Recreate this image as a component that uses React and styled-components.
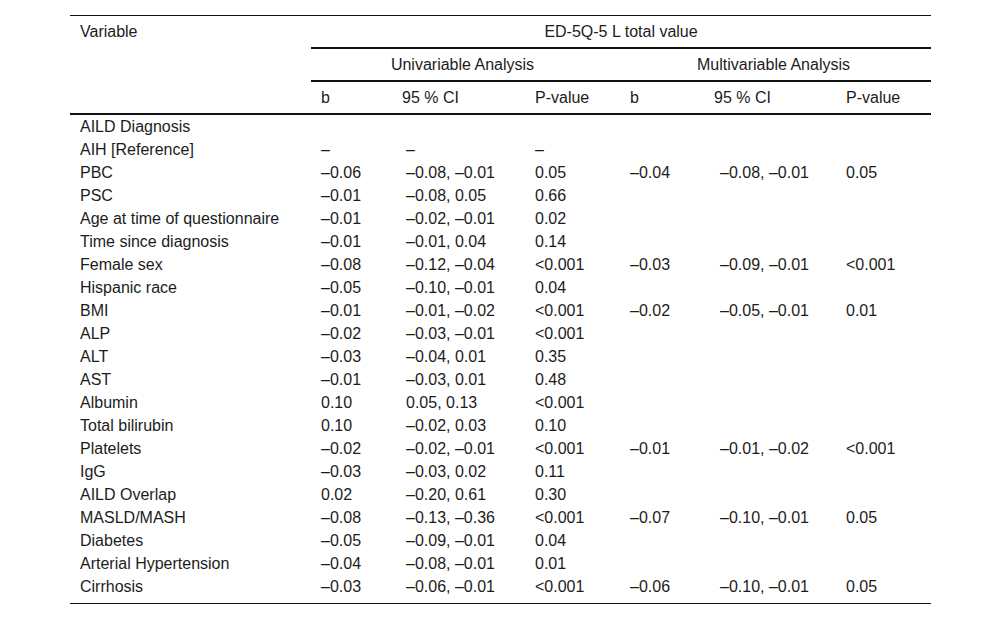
import React from 'react';
import styled, { createGlobalStyle } from 'styled-components';

const GlobalStyle = createGlobalStyle`
  html, body {
    margin: 0;
    padding: 0;
    background: #fff;
  }
  body {
    font-family: "Liberation Sans", Arial, sans-serif;
    color: #1c1c1c;
  }
`;

const rows = [
  ['AILD Diagnosis'],
  ['AIH [Reference]', '–', '–', '–'],
  ['PBC', '–0.06', '–0.08, –0.01', '0.05', '–0.04', '–0.08, –0.01', '0.05'],
  ['PSC', '–0.01', '–0.08, 0.05', '0.66'],
  ['Age at time of questionnaire', '–0.01', '–0.02, –0.01', '0.02'],
  ['Time since diagnosis', '–0.01', '–0.01, 0.04', '0.14'],
  ['Female sex', '–0.08', '–0.12, –0.04', '<0.001', '–0.03', '–0.09, –0.01', '<0.001'],
  ['Hispanic race', '–0.05', '–0.10, –0.01', '0.04'],
  ['BMI', '–0.01', '–0.01, –0.02', '<0.001', '–0.02', '–0.05, –0.01', '0.01'],
  ['ALP', '–0.02', '–0.03, –0.01', '<0.001'],
  ['ALT', '–0.03', '–0.04, 0.01', '0.35'],
  ['AST', '–0.01', '–0.03, 0.01', '0.48'],
  ['Albumin', '0.10', '0.05, 0.13', '<0.001'],
  ['Total bilirubin', '0.10', '–0.02, 0.03', '0.10'],
  ['Platelets', '–0.02', '–0.02, –0.01', '<0.001', '–0.01', '–0.01, –0.02', '<0.001'],
  ['IgG', '–0.03', '–0.03, 0.02', '0.11'],
  ['AILD Overlap', '0.02', '–0.20, 0.61', '0.30'],
  ['MASLD/MASH', '–0.08', '–0.13, –0.36', '<0.001', '–0.07', '–0.10, –0.01', '0.05'],
  ['Diabetes', '–0.05', '–0.09, –0.01', '0.04'],
  ['Arterial Hypertension', '–0.04', '–0.08, –0.01', '0.01'],
  ['Cirrhosis', '–0.03', '–0.06, –0.01', '<0.001', '–0.06', '–0.10, –0.01', '0.05'],
];

const colWidths = [241, 85, 129, 95, 90, 126, 95];

function App() {
  return (
    <Page>
      <GlobalStyle />
      <Table>
        <colgroup>
          {colWidths.map((w, i) => (
            <col key={i} style={{ width: w }} />
          ))}
        </colgroup>
        <thead>
          <tr>
            <HeadCell rowSpan={3} $top>
              Variable
            </HeadCell>
            <HeadCell colSpan={6} $center $rule>
              ED-5Q-5 L total value
            </HeadCell>
          </tr>
          <tr>
            <HeadCell colSpan={3} $center $rule $shift={-6}>
              Univariable Analysis
            </HeadCell>
            <HeadCell colSpan={3} $center $rule $shift={-4}>
              Multivariable Analysis
            </HeadCell>
          </tr>
          <tr>
            <HeadCell $rule>b</HeadCell>
            <HeadCell $rule $shift={-4}>95 % CI</HeadCell>
            <HeadCell $rule>P-value</HeadCell>
            <HeadCell $rule>b</HeadCell>
            <HeadCell $rule $shift={-6}>95 % CI</HeadCell>
            <HeadCell $rule>P-value</HeadCell>
          </tr>
        </thead>
        <tbody>
          {rows.map((r, i) => (
            <tr key={i}>
              {Array.from({ length: 7 }).map((_, j) => (
                <Cell key={j} $last={i === rows.length - 1}>
                  {r[j] || ''}
                </Cell>
              ))}
            </tr>
          ))}
        </tbody>
      </Table>
    </Page>
  );
}

export default App;

// STYLED COMPONENTS
const Page = styled.div`
  padding: 15px 0 0 70px;
`;

const Table = styled.table`
  width: 861px;
  table-layout: fixed;
  border-collapse: separate;
  border-spacing: 0;
  border-top: 1px solid #111;
  border-bottom: 1px solid #111;
  font-size: 16px;
`;

const HeadCell = styled.th`
  font-weight: normal;
  text-align: ${(p) => (p.$center ? 'center' : 'left')};
  vertical-align: top;
  line-height: 31px;
  height: 31px;
  padding: 0 10px 0 ${(p) => 10 + (p.$shift || 0)}px;
  border-bottom: 2px solid #111;
  white-space: nowrap;
`;

const Cell = styled.td`
  text-align: left;
  line-height: 23px;
  height: 23px;
  padding: 0 10px ${(p) => (p.$last ? '5px' : '0')} 10px;
  white-space: nowrap;
`;
